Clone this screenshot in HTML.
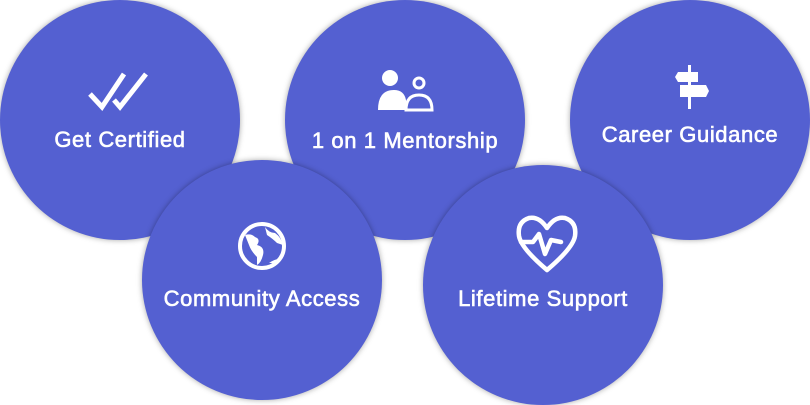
<!DOCTYPE html>
<html><head><style>
body{margin:0;width:810px;height:405px;background:#fff;position:relative;overflow:hidden;font-family:"Liberation Sans",sans-serif}
.c{position:absolute;width:240px;height:240px;border-radius:50%;background:#5460d1;box-shadow:0 0 6px rgba(0,0,0,.35)}
.t{position:absolute;width:300px;text-align:center;color:#fff;font-size:22px;font-weight:normal;-webkit-text-stroke:0.6px #fff;letter-spacing:0.6px}
svg{position:absolute}
</style></head><body>
<div class="c" style="left:0;top:0"></div>
<div class="c" style="left:285px;top:0"></div>
<div class="c" style="left:570px;top:0"></div>
<div class="c" style="left:142px;top:160px"></div>
<div class="c" style="left:423px;top:165px"></div>

<div class="t" style="left:-30px;top:127px">Get Certified</div>
<div class="t" style="left:255px;top:128px">1 on 1 Mentorship</div>
<div class="t" style="left:540px;top:122px">Career Guidance</div>
<div class="t" style="left:112px;top:286px">Community Access</div>
<div class="t" style="left:393px;top:286px">Lifetime Support</div>

<svg style="left:86px;top:70px" width="66" height="42" viewBox="0 0 66 42"><path d="M4 24 L16 37 L38 4 M28 30 L34 37 L60 4" stroke="#fff" stroke-width="5" fill="none"/></svg>

<svg style="left:376px;top:68px" width="58" height="44" viewBox="0 0 58 44"><circle cx="14" cy="10" r="8" fill="#fff"/><path d="M2 42 Q2 22 18 22 Q28 22 30 32 L30 42Z" fill="#fff"/><circle cx="43" cy="15" r="5" stroke="#fff" stroke-width="3" fill="none"/><path d="M30 42 Q30 27 43 27 Q56 27 56 42Z" stroke="#fff" stroke-width="3" fill="#5460d1"/></svg>

<svg style="left:668px;top:62px" width="46" height="48" viewBox="0 0 46 48"><rect x="20" y="3" width="3" height="44" fill="#fff"/><path d="M10 10 H30 V20 H10 L7 15Z" fill="#fff"/><path d="M12 23 H38 L41 29 L38 35 H12Z" fill="#fff"/></svg>

<svg style="left:235px;top:219px" width="54" height="54" viewBox="0 0 54 54"><circle cx="27" cy="27" r="22" stroke="#fff" stroke-width="4" fill="none"/><path d="M10 16 Q16 14 20 18 Q26 20 22 26 Q30 28 28 36 Q26 44 22 46 L22 38 Q16 32 14 26 Z" fill="#fff"/><path d="M30 8 Q34 14 40 14 Q46 18 48 26 L42 24 Q38 20 32 16Z" fill="#fff"/><path d="M34 44 Q40 40 44 40 L42 44Z" fill="#fff"/></svg>

<svg style="left:515px;top:214px" width="64" height="60" viewBox="0 0 64 60"><path d="M32 14 Q24 2 14 4 Q2 8 4 22 Q6 34 32 56 Q58 34 60 22 Q62 8 50 4 Q40 2 32 14Z" stroke="#fff" stroke-width="4.5" fill="none" stroke-linejoin="round"/><path d="M6 28 L18 28 L24 20 L30 40 L36 26 L46 28" stroke="#fff" stroke-width="4.5" fill="none" stroke-linejoin="round" stroke-linecap="round"/></svg>
</body></html>
